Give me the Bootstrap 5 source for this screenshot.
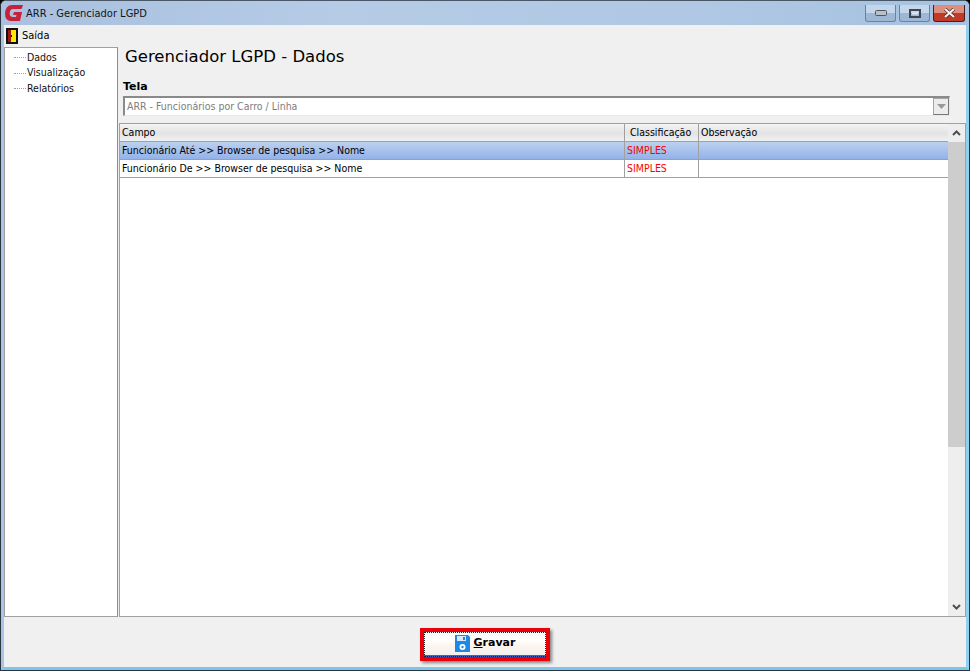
<!DOCTYPE html>
<html lang="pt-BR">
<head>
    <title>ARR - Gerenciador LGPD</title>
    <meta charset="utf-8">
    <meta name="viewport" content="width=device-width, initial-scale=1">
    <link href="https://cdn.jsdelivr.net/npm/bootstrap@5.3.3/dist/css/bootstrap.min.css" rel="stylesheet">
    <style>
        html, body { height: 100%; overflow: hidden; }
        body { font-family: "DejaVu Sans", "Liberation Sans", sans-serif; font-stretch: condensed; font-size: 10.5px; color: #000; background: #000; }
        .janela { width: 970px; height: 671px; background: #f0f0f0; border: 1px solid #2b3440; border-top-color: #4a5766; border-radius: 6px 6px 0 0; overflow: hidden; }
        .moldura { border-left: 3px solid #a9c4e4; border-right: 3px solid #8fd0ee; border-bottom: 3px solid #7cc6ea; min-height: 0; }
        .titulo { height: 24px; background: linear-gradient(90deg, #a9c0de 0%, #b5cbe6 35%, #b0c8e4 70%, #a5c2e0 100%); padding-left: 4px; }
        .titulo-txt { font-size: 11px; margin-left: 3px; padding-top: 1px; color: #10141a; }
        .win-btn { height: 17px; border: 1px solid #6d819b; border-top: 0; border-radius: 0 0 3px 3px; background: linear-gradient(#c4d6ea 0 48%, #9db7d5 52% 100%); margin-top: 4px; }
        .win-min, .win-max { width: 31px; }
        .win-fechar { width: 32px; border-color: #4a1c1c; background: linear-gradient(#dc8f80 0 48%, #c03a28 52% 100%); margin-left: 3px; margin-right: 4px; }
        .win-max { margin-left: 3px; }
        .menu-topo { height: 22px; background: #f0f0f0; font-size: 11px; padding-left: 2px; }
        .corpo { min-height: 0; }
        .arvore { width: 114px; background: #fff; border: 1px solid #a0a0a0; border-right-color: #8c8c8c; padding-top: 1px; }
        .arvore-item { height: 16px; line-height: 16px; padding-left: 9px; color: #111; margin-top: -.5px; }
        .pontilhado { display: inline-block; width: 12px; border-top: 1px dotted #a0a0a0; vertical-align: middle; margin-right: 1px; }
        .conteudo { min-width: 0; padding-left: 1px; }
        .titulo-tela { font-family: "DejaVu Sans", sans-serif; font-stretch: normal; font-size: 16.5px; line-height: 20px; padding: 0 0 0 6px; margin: 0 0 13px; font-weight: 400; }
        .rotulo { font-family: "DejaVu Sans", sans-serif; font-stretch: normal; font-size: 11px; font-weight: 700; line-height: 14px; padding-left: 4px; }
        .combo { height: 20px; margin: 2px 16px 7px 4px; background: #fff; border: 1px solid #8a8a8a; border-right-color: #e8e8e8; border-bottom-color: #e8e8e8; border-top-width: 2px; border-left-width: 2px; color: #7d7d7d; padding-left: 2px; line-height: 16px; }
        .combo-seta { width: 16px; height: 17px; background: #ececec; border: 1px solid #a5a5a5; border-right-color: #777; border-bottom-color: #777; }
        .grade { min-height: 0; background: #fff; border: 1px solid #a0a0a0; }
        .grade-area { min-width: 0; }
        .linha { height: 18px; line-height: 17px; border-bottom: 1px solid #a0a0a0; width: 829px; border-right: 1px solid #a0a0a0; }
        .linha > div { padding-left: 2px; overflow: hidden; white-space: nowrap; }
        .c1 { width: 505px; border-right: 1px solid #a0a0a0; }
        .c2 { width: 74px; border-right: 1px solid #a0a0a0; }
        .c3 { flex: 1; }
        .cabecalho { background: linear-gradient(#f4f4f4, #e3e3e3 55%, #f1f1f1); }
        .cabecalho .c2 { padding-left: 5px; }
        .selecionada { background: linear-gradient(#bcd1f0, #93b2e8); }
        .vermelho { color: #f00; }
        .rolagem { width: 17px; background: #eee; }
        .rolagem-seta { height: 18px; }
        .rolagem-cursor { height: 305px; background: #cdcdcd; }
        .rodape { height: 50px; background: #f0f0f0; }
        .destaque { border: 4px solid #e8000b; box-shadow: 2px 2px 3px rgba(0,0,0,.45); width: 130px; height: 33px; padding: 0; margin-top: 11px; background: linear-gradient(#f6f6f6, #fff 30%, #fdf5ee 55%, #efefef); border-radius: 0; }
        .destaque-int { outline: 1px dotted #222; outline-offset: -1px; border-bottom: 2px solid #3b62c4; }
        .gravar-txt { font-family: "DejaVu Sans", sans-serif; font-stretch: normal; font-weight: 700; font-size: 11px; color: #000; }
    </style>
</head>
<body>
    <div class="janela d-flex flex-column">
        <!-- Barra de titulo -->
        <div class="titulo d-flex align-items-start flex-shrink-0">
            <svg class="mt-1" width="18" height="16" viewBox="0 0 18 16">
                <path d="M7 0H18L16.5 4H8Q5 4 4.7 8T8 12H11L11.5 10H8L9 7H17L15 16H6Q0 16 0 8.500Q.5 0 7 0Z" fill="#c3223a"/>
            </svg>
            <div class="titulo-txt flex-grow-1 mt-1">ARR - Gerenciador LGPD</div>
            <div class="win-btn win-min d-flex align-items-center justify-content-center"><svg width="12" height="6"><rect x=".5" y=".5" width="11" height="5" rx="1" fill="#b9c0c8" stroke="#4a5460"/></svg></div>
            <div class="win-btn win-max d-flex align-items-center justify-content-center"><svg width="12" height="9"><rect x="1" y="1" width="10" height="7" fill="none" stroke="#3d4652" stroke-width="2"/><rect x="3" y="3.500" width="6" height="2" fill="#dfe5ec"/></svg></div>
            <div class="win-btn win-fechar d-flex align-items-center justify-content-center"><svg width="13" height="10"><path d="M2 1l9 8M11 1l-9 8" stroke="#5a2a2a" stroke-width="3.600"/><path d="M2 1l9 8M11 1l-9 8" stroke="#f4f0f0" stroke-width="2.200"/></svg></div>
        </div>
        <div class="moldura flex-grow-1 d-flex flex-column">
            <!-- Menu -->
            <div class="menu-topo d-flex align-items-center gap-1 flex-shrink-0">
                <svg width="12" height="16" viewBox="0 0 12 16">
                    <rect width="12" height="16" fill="#111"/>
                    <rect x="5" y="2" width="5" height="12" fill="#ffe900"/>
                    <rect x="2" y="2" width="3" height="12" fill="#a31414"/>
                    <rect x="5" y="7" width="1" height="2" fill="#111"/>
                </svg>
                <span>Saída</span>
            </div>
            <!-- Corpo -->
            <div class="corpo flex-grow-1 d-flex">
                <div class="arvore flex-shrink-0">
                    <div class="arvore-item"><span class="pontilhado"></span>Dados</div>
                    <div class="arvore-item"><span class="pontilhado"></span>Visualização</div>
                    <div class="arvore-item"><span class="pontilhado"></span>Relatórios</div>
                </div>
                <div class="conteudo flex-grow-1 d-flex flex-column">
                    <h1 class="titulo-tela">Gerenciador LGPD - Dados</h1>
                    <div class="rotulo">Tela</div>
                    <div class="combo d-flex justify-content-between flex-shrink-0">
                        <span>ARR - Funcionários por Carro / Linha</span>
                        <div class="combo-seta d-flex align-items-center justify-content-center"><svg width="9" height="5"><path d="M0 0h9L4.500 5z" fill="#9a9a9a"/></svg></div>
                    </div>
                    <div class="grade flex-grow-1 d-flex">
                        <div class="grade-area flex-grow-1">
                            <div class="linha cabecalho d-flex">
                                <div class="c1">Campo</div><div class="c2">Classificação</div><div class="c3">Observação</div>
                            </div>
                            <div class="linha selecionada d-flex">
                                <div class="c1">Funcionário Até &gt;&gt; Browser de pesquisa &gt;&gt; Nome</div><div class="c2 vermelho">SIMPLES</div><div class="c3"></div>
                            </div>
                            <div class="linha d-flex">
                                <div class="c1">Funcionário De &gt;&gt; Browser de pesquisa &gt;&gt; Nome</div><div class="c2 vermelho">SIMPLES</div><div class="c3"></div>
                            </div>
                        </div>
                        <div class="rolagem flex-shrink-0 d-flex flex-column">
                            <div class="rolagem-seta d-flex align-items-center justify-content-center"><svg width="9" height="6"><path d="M1 5l3.500-3.500L8 5" fill="none" stroke="#505050" stroke-width="2"/></svg></div>
                            <div class="rolagem-cursor"></div>
                            <div class="flex-grow-1"></div>
                            <div class="rolagem-seta d-flex align-items-center justify-content-center"><svg width="9" height="6"><path d="M1 1l3.500 3.500L8 1" fill="none" stroke="#505050" stroke-width="2"/></svg></div>
                        </div>
                    </div>
                </div>
            </div>
            <!-- Rodape -->
            <div class="rodape d-flex justify-content-center align-items-start flex-shrink-0">
                <button type="button" class="btn destaque">
                    <div class="destaque-int h-100 d-flex align-items-center justify-content-center gap-1">
                        <svg width="15" height="17" viewBox="0 0 15 17">
                            <path d="M0 0H13L15 2V17H0Z" fill="#1e88e5"/>
                            <rect x="2" y="1" width="9" height="5" fill="#d6e8f8"/>
                            <rect x="8" y="2" width="2" height="3" fill="#1e88e5"/>
                            <circle cx="7.500" cy="12" r="3" fill="#fff"/>
                            <circle cx="7.500" cy="12" r="1.200" fill="#1e88e5"/>
                        </svg>
                        <span class="gravar-txt"><u>G</u>ravar</span>
                    </div>
                </button>
            </div>
        </div>
    </div>
</body>
</html>
